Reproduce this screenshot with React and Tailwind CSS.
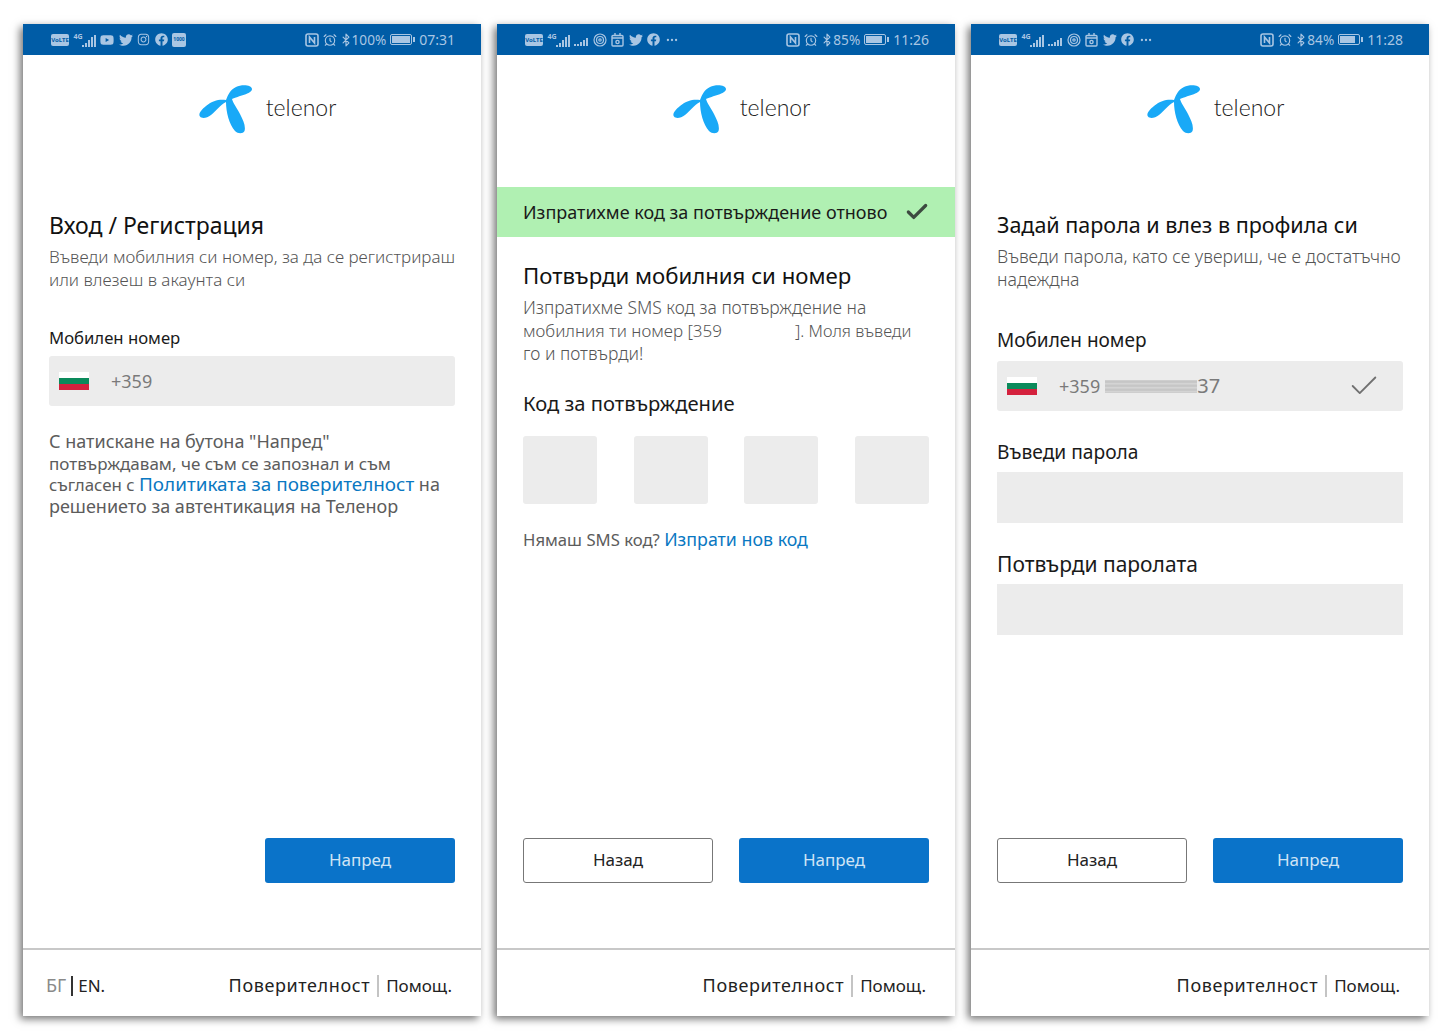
import React from 'react';
import { FaYoutube, FaTwitter, FaInstagram, FaFacebook } from 'react-icons/fa';
import { Check, Bluetooth, AlarmClock, Ellipsis } from 'lucide-react';

const Bars = ({ label }) => (
  <span className="relative flex h-[14px] w-[22px] items-end justify-end gap-[1px]">
    <span className="absolute left-0 top-0 text-[7px] font-bold leading-[7px]">{label}</span>
    <span className="h-[2px] w-[2px] bg-[#a9c6e3]" />
    <span className="h-[4px] w-[2px] bg-[#a9c6e3]" />
    <span className="h-[7px] w-[2px] bg-[#a9c6e3]" />
    <span className="h-[10px] w-[2px] bg-[#a9c6e3]" />
    <span className="h-[12px] w-[2px] bg-[#a9c6e3]" />
  </span>
);

const Volte = () => (
  <span className="flex h-[12px] w-[18px] items-center justify-center rounded-[2px] bg-[#a9c6e3] text-[6px] font-bold leading-none text-[#005ca6]">VoLTE</span>
);

const DataSpeed = () => (
  <span className="flex h-[12px] w-[14px] items-end gap-[1px]">
    <span className="h-[2px] w-[2px] bg-[#a9c6e3]" />
    <span className="h-[2px] w-[2px] bg-[#a9c6e3]" />
    <span className="h-[4px] w-[2px] bg-[#a9c6e3]" />
    <span className="h-[6px] w-[2px] bg-[#a9c6e3]" />
    <span className="h-[8px] w-[2px] bg-[#a9c6e3]" />
  </span>
);

const Nfc = () => (
  <svg width="14" height="14" viewBox="0 0 14 14" fill="none" stroke="#a9c6e3" strokeWidth="1.6">
    <rect x="1" y="1" width="12" height="12" rx="2" />
    <path d="M4.5 10V4l5 6V4" />
  </svg>
);

const Battery = ({ pct }) => (
  <span className="flex items-center gap-[1px]">
    <span className="flex h-[11px] w-[22px] rounded-[2px] border border-[#a9c6e3] p-[1px]">
      <span className={`h-full bg-[#a9c6e3] ${pct}`} />
    </span>
    <span className="h-[5px] w-[2px] bg-[#a9c6e3]" />
  </span>
);

const StatusBar = ({ left, level, battery, time }) => (
  <div className="flex h-[31px] shrink-0 items-center justify-between bg-[#005ca6] pl-[28px] pr-[26px] text-[14px] text-[#a9c6e3]">
    <div className="flex items-center gap-[4.5px]">{left}</div>
    <div className="flex items-center">
      <Nfc />
      <AlarmClock size={14} className="ml-[4px]" />
      <Bluetooth size={14} className="ml-[2px] -mr-[1px]" />
      <span className="text-[13.6px] leading-[21px]">{level}</span>
      <span className="ml-[4px]"><Battery pct={battery} /></span>
      <span className="ml-[4px]">{time}</span>
    </div>
  </div>
);

const Logo = () => (
  <div className="flex h-[132px] shrink-0 items-start justify-center pl-[31px] pt-[29px]">
    <svg width="54" height="50" viewBox="199 84 54 50" fill="#19a9f7">
      <path d="M252 89C252 85 242 84 236 87C230 90 228 95 226 100C220 99 213 100 206 106C201 110 198 114 200 116.5C202 119 207 118 211 115C216 111 220 105 226 102C226 112 229 124 235 131C238 134 243 134 244.5 131C246 126 243 120 240 114C237 108 233 103 232 99C238 96 252 94 252 89Z" />
    </svg>
    <span className="ml-[13px] mt-[8px] font-['Lato',sans-serif] text-[23px] font-light leading-[30px] text-[#222]">telenor</span>
  </div>
);

const Flag = () => (
  <span className="flex h-[18px] w-[30px] shrink-0 flex-col">
    <span className="flex-1 bg-white" />
    <span className="flex-1 bg-[#0b8a5b]" />
    <span className="flex-1 bg-[#d4213d]" />
  </span>
);

const Footer = ({ lang }) => (
  <div className="mt-[65px] flex h-[68px] shrink-0 items-center justify-between border-t-2 border-[#c8c8c8] pl-[23px] pr-[29px] pt-[5px] text-[17px] text-[#222]">
    <div className="flex items-center">
      {lang && (
        <>
          <span className="text-[18px] text-[#8a8a8a]">БГ</span>
          <span className="mx-[5px] h-[20px] w-[2px] bg-[#333]" />
          <span>EN.</span>
        </>
      )}
    </div>
    <div className="flex items-center">
      <span className="text-[18px] tracking-[0.6px]">Поверителност</span>
      <span className="mx-[7px] h-[22px] w-[2px] bg-[#c4c4c4]" />
      <span>Помощ.</span>
    </div>
  </div>
);

const Buttons = ({ back }) => (
  <div className="mt-auto flex justify-end gap-[26px] px-[26px]">
    {back && (
      <button className="h-[45px] w-[190px] rounded-[3px] border border-[#777] bg-white pb-[2px] text-[17px] text-[#222]">Назад</button>
    )}
    <button className="h-[45px] w-[190px] rounded-[3px] bg-[#0a73c9] pb-[2px] text-[17px] text-[#cfe4f5]">Напред</button>
  </div>
);

const Phone = ({ status, lang, back, children }) => (
  <div className="flex h-[992px] w-[458px] flex-col bg-white shadow-[-3px_3px_8px_rgba(0,0,0,0.55)]">
    <StatusBar {...status} />
    <Logo />
    <div className="flex min-h-0 flex-1 flex-col">{children}</div>
    <Buttons back={back} />
    <Footer lang={lang} />
  </div>
);

const Title = ({ size, children }) => (
  <h1 className={`font-normal leading-[30px] text-[#111] ${size}`}>{children}</h1>
);

const Lead = ({ size, children }) => (
  <p className={`mt-[5px] whitespace-nowrap font-light leading-[23px] text-[#555] ${size}`}>{children}</p>
);

const Label = ({ children, className }) => (
  <div className={`leading-[26px] text-[#1a1a1a] ${className}`}>{children}</div>
);

const Empty = () => <div className="mt-[7px] h-[51px] bg-[#ececec]" />;

const leftOne = (
  <>
    <Volte />
    <Bars label="4G" />
    <FaYoutube size={14} />
    <FaTwitter size={14} />
    <FaInstagram size={13} />
    <FaFacebook size={13} />
    <span className="flex h-[14px] w-[14px] items-center justify-center rounded-[2px] bg-[#a9c6e3] text-[5px] font-bold text-[#005ca6]">1000</span>
  </>
);

const leftTwo = (
  <>
    <Volte />
    <Bars label="4G" />
    <DataSpeed />
    <svg width="14" height="14" viewBox="0 0 14 14" fill="none" stroke="#a9c6e3" strokeWidth="1.2">
      <circle cx="7" cy="7" r="6" />
      <circle cx="7" cy="7" r="3.5" />
      <circle cx="7" cy="7" r="1.2" />
    </svg>
    <svg width="13" height="14" viewBox="0 0 13 14" fill="none" stroke="#a9c6e3" strokeWidth="1.4">
      <rect x="1" y="2.5" width="11" height="10.5" rx="1" />
      <path d="M1 5h11M4 0v3M9 0v3" />
      <circle cx="6.5" cy="9" r="1.6" />
    </svg>
    <FaTwitter size={14} />
    <FaFacebook size={13} />
    <Ellipsis size={14} />
  </>
);

const statusA = { left: leftOne, level: '100%', battery: 'w-full', time: '07:31' };
const statusB = { left: leftTwo, level: '85%', battery: 'w-[85%]', time: '11:26' };
const statusC = { left: leftTwo, level: '84%', battery: 'w-[84%]', time: '11:28' };

export default function App() {
  return (
    <div className="flex min-h-[1033px] gap-[16px] bg-white pl-[23px] pt-[24px] font-['Noto_Sans',sans-serif]">
      <Phone status={statusA} lang>
        <div className="px-[26px] pt-[23px]">
          <Title size="text-[23px]">Вход / Регистрация</Title>
          <Lead size="text-[17px]">Въведи мобилния си номер, за да се регистрираш<br />или влезеш в акаунта си</Lead>
          <Label className="mt-[34px] text-[16.7px]">Мобилен номер</Label>
          <div className="mt-[5px] flex h-[50px] items-center rounded-[3px] bg-[#ececec] pl-[10px] text-[18px] text-[#7a7a7a]">
            <Flag />
            <span className="ml-[22px]">+359</span>
          </div>
          <p className="mt-[25px] whitespace-nowrap text-[18px] leading-[21.6px] text-[#5c5c5c]">
            С натискане на бутона "Напред"<br />
            <span className="text-[17px]">потвърждавам, че съм се запознал и съм</span><br />
            <span className="text-[16.9px]">съгласен с </span>
            <span className="text-[18.9px] text-[#0a78c2]">Политиката за поверителност</span> на<br />
            решението за автентикация на Теленор
          </p>
        </div>
      </Phone>

      <Phone status={statusB} back>
        <div className="flex h-[50px] items-center justify-between bg-[#b0f0b2] pl-[26px] pr-[25px] text-[18px] text-[#1a1a1a]">
          <span className="whitespace-nowrap">Изпратихме код за потвърждение отново</span>
          <Check size={26} strokeWidth={3} className="text-[#3d4a40]" />
        </div>
        <div className="px-[26px] pt-[24px]">
          <Title size="text-[22.2px]">Потвърди мобилния си номер</Title>
          <Lead size="text-[17.5px]">
            Изпратихме SMS код за потвърждение на<br />
            <span className="text-[17px]">мобилния ти номер [359</span>
            <span className="inline-block w-[73px]" />
            <span className="text-[16.5px]">]. Моля въведи</span><br />
            го и потвърди!
          </Lead>
          <Label className="mt-[25px] text-[20.2px]">Код за потвърждение</Label>
          <div className="mt-[20px] flex justify-between">
            <div className="h-[68px] w-[74px] rounded-[3px] bg-[#ececec]" />
            <div className="h-[68px] w-[74px] rounded-[3px] bg-[#ececec]" />
            <div className="h-[68px] w-[74px] rounded-[3px] bg-[#ececec]" />
            <div className="h-[68px] w-[74px] rounded-[3px] bg-[#ececec]" />
          </div>
          <p className="mt-[23px] whitespace-nowrap text-[16.7px] leading-[24px] text-[#5c5c5c]">
            Нямаш SMS код? <span className="text-[17.8px] text-[#0a78c2]">Изпрати нов код</span>
          </p>
        </div>
      </Phone>

      <Phone status={statusC} back>
        <div className="px-[26px] pt-[23px]">
          <Title size="text-[21.5px]">Задай парола и влез в профила си</Title>
          <Lead size="text-[17.7px]">Въведи парола, като се увериш, че е достатъчно<br />надеждна</Lead>
          <Label className="mt-[36px] text-[19px]">Мобилен номер</Label>
          <div className="mt-[8px] flex h-[50px] items-center rounded-[3px] bg-[#ececec] pl-[10px] pr-[22px] text-[18px] text-[#7a7a7a]">
            <Flag />
            <span className="ml-[22px]">+359</span>
            <span className="ml-[5px] h-[13px] w-[92px] bg-[repeating-linear-gradient(to_bottom,#d2d2d2_0px,#c2c2c2_2px,#dadada_4px)] blur-[0.5px]" />
            <span className="text-[20px]">37</span>
            <Check size={34} strokeWidth={1.3} className="ml-auto text-[#707070]" />
          </div>
          <Label className="mt-[28px] text-[19.2px]">Въведи парола</Label>
          <Empty />
          <Label className="mt-[28px] text-[21px]">Потвърди паролата</Label>
          <Empty />
        </div>
      </Phone>
    </div>
  );
}
